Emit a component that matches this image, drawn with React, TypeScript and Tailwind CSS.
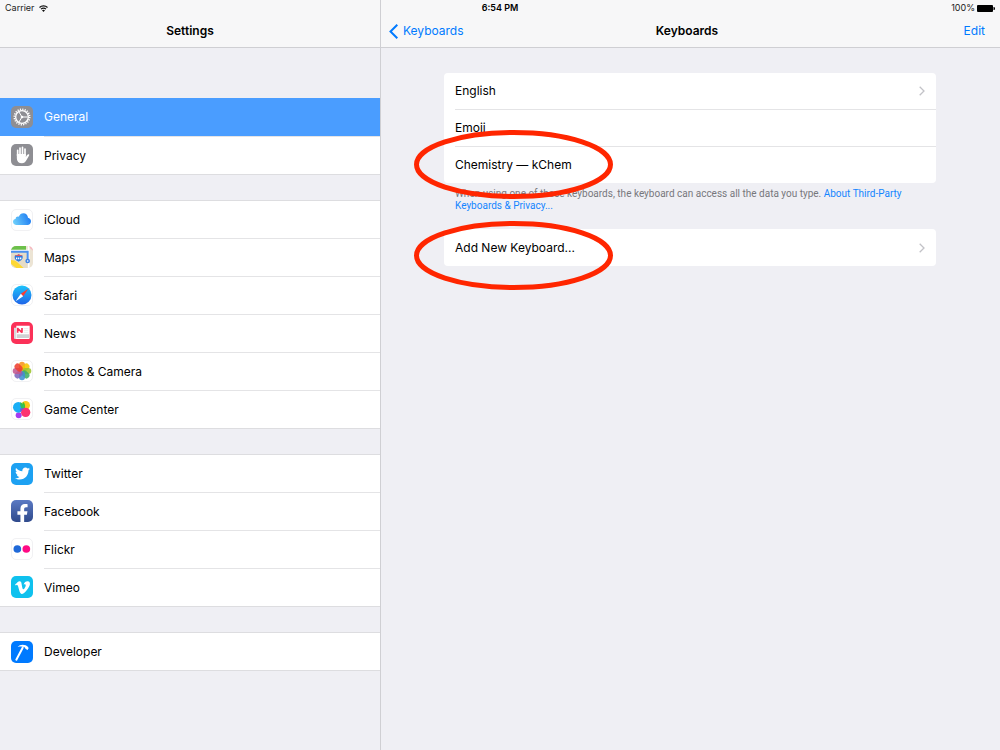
import type { ReactNode } from "react";
import { FaFacebookF, FaTwitter, FaVimeoV } from "react-icons/fa";

interface Item {
  label: string;
  icon: ReactNode;
}

const Tile = ({ className, children }: { className: string; children?: ReactNode }) => (
  <span
    aria-hidden="true"
    className={`relative flex size-[22px] shrink-0 items-center justify-center overflow-hidden rounded-[5px] ${className}`}
  >
    {children}
  </span>
);

// All hand drawn icons share a 66 unit grid
const Art = ({ children }: { children: ReactNode }) => (
  <svg viewBox="0 0 66 66" className="size-[22px] shrink-0" fill="none">
    {children}
  </svg>
);

const GearIcon = () => (
  <Tile className="bg-[#8e8e93]">
    <Art>
      <circle cx="33" cy="33" r="23" stroke="#fff" strokeWidth="5" strokeDasharray="3.6 3.63" />
      <circle cx="33" cy="33" r="19" stroke="#fff" strokeWidth="4" />
      <path d="M33 33h17M33 33l-9-15M33 33l-9 15" stroke="#fff" strokeWidth="3" />
      <circle cx="33" cy="33" r="4" fill="#fff" />
    </Art>
  </Tile>
);

const HandIcon = () => (
  <Tile className="bg-[#8e8e93]">
    <Art>
      <path d="M20 35V19M27 32V12M34.500 32V10M42 34V15" stroke="#fff" strokeWidth="5" strokeLinecap="round" />
      <path
        d="M17.500 30h27v9c2-3 4-7 7-8 3-.5 4 1 2.500 4L46 49c-3 6-7 9-13 9-10 0-15.500-6-15.500-15z"
        fill="#fff"
      />
    </Art>
  </Tile>
);

const CloudIcon = () => (
  <Tile className="border border-[#f1f1f3] bg-white">
    <Art>
      <defs>
        <linearGradient id="cloud" x1="8" y1="44" x2="58" y2="24" gradientUnits="userSpaceOnUse">
          <stop stopColor="#6fd0fb" />
          <stop offset="1" stopColor="#1e7cf2" />
        </linearGradient>
      </defs>
      <path
        d="M17 48C10 48 6 44 6 38.500c0-5 3.500-8.500 8-9.500 0-5 5-8 9.500-6C26 16.500 31 13 37 13c8 0 13.500 6 14 13.500 5 1 9 5 9 10.500 0 6.500-4.500 11-11 11z"
        fill="url(#cloud)"
      />
    </Art>
  </Tile>
);

const MapsIcon = () => (
  <Tile className="bg-[#ece4d4]">
    <Art>
      <path d="M0 0h45v12H0z" fill="#6cc04a" />
      <path d="M50 0h16v14z" fill="#f7b6c0" />
      <path d="M0 12h53v54H0z" fill="#e5dcc8" />
      <path d="M0 42c16 0 22 10 38 24H16L0 54z" fill="#fdd835" />
      <path d="M53 0v66M0 14h50" stroke="#fff" strokeWidth="5" />
      <path d="M0 17h50v28" stroke="#4a90f0" strokeWidth="6" />
      <circle cx="50" cy="45" r="7" fill="#3b82e8" />
      <circle cx="50" cy="45" r="2.500" fill="#fff" />
      <path d="M12 28c4 1 7 0 11-3 4 3 7 4 11 3 3 9 0 15-11 19-11-4-14-10-11-19z" fill="#2f7be0" />
      <path d="M13 28c4 1 6 0 10-3 4 3 6 4 10 3v2H13z" fill="#e7505a" />
      <path d="M15 37h16" stroke="#fff" strokeWidth="5" strokeDasharray="4 2" />
    </Art>
  </Tile>
);

const SafariIcon = () => (
  <Tile className="border border-[#f1f1f3] bg-white">
    <Art>
      <defs>
        <linearGradient id="safari" x1="33" y1="4" x2="33" y2="62" gradientUnits="userSpaceOnUse">
          <stop stopColor="#1dc4fb" />
          <stop offset="1" stopColor="#1f63e8" />
        </linearGradient>
      </defs>
      <circle cx="33" cy="33" r="28.500" fill="url(#safari)" />
      <path d="M52 14L29.500 29.500l7 7z" fill="#ff3b30" />
      <path d="M14 52l15.500-22.500 7 7z" fill="#fff" />
    </Art>
  </Tile>
);

const NewsIcon = () => (
  <Tile className="bg-[#fb3158]">
    <Art>
      <path d="M9 17h9v34H13c-3 0-4-2-4-4z" fill="#d9d9dc" />
      <path d="M16 11h40v36c0 3-1 4-4 4H12c3 0 4-1 4-4z" fill="#fff" />
      <path d="M20 18v14M33 18v14M19 18l14 14" stroke="#fb3158" strokeWidth="5" />
      <path d="M38 20h14M38 26h14M38 32h14" stroke="#ececee" strokeWidth="3" />
      <path d="M18 37h36v11H18z" fill="#d0d0d3" />
    </Art>
  </Tile>
);

const petals = [
  ["#f7931e", 0],
  ["#f5c400", 45],
  ["#9cc42c", 90],
  ["#3fae68", 135],
  ["#3f8fd2", 180],
  ["#7d68bd", 225],
  ["#c2588f", 270],
  ["#ee4030", 315],
] as const;

const PhotosIcon = () => (
  <Tile className="border border-[#f1f1f3] bg-white">
    <Art>
      {petals.map(([color, angle]) => (
        <rect
          key={angle}
          x="24"
          y="5"
          width="18"
          height="27"
          rx="9"
          fill={color}
          fillOpacity="0.88"
          transform={`rotate(${angle} 33 33)`}
        />
      ))}
    </Art>
  </Tile>
);

const GameIcon = () => (
  <Tile className="border border-[#f1f1f3] bg-white">
    <Art>
      <circle cx="44" cy="22" r="13" fill="#f8c81c" />
      <path d="M36 12c6 3 8 12 5 21l-9-2z" fill="#43c52c" />
      <circle cx="23" cy="52" r="9" fill="#a43cf0" />
      <circle cx="22" cy="28" r="16" fill="#19aef5" />
      <path d="M28 13c9 3 13 14 9 23-7-3-11-14-9-23z" fill="#2fbf5c" />
      <circle cx="44" cy="43" r="14" fill="#fc3470" />
      <path d="M30 42c-3-4-3-8-1-11 4 1 8 0 12 0-5 3-9 6-11 11z" fill="#7356d8" />
    </Art>
  </Tile>
);

const FlickrIcon = () => (
  <Tile className="border border-[#f1f1f3] bg-white">
    <Art>
      <circle cx="19" cy="33" r="11.500" fill="#1f69d8" />
      <circle cx="46" cy="33" r="11.500" fill="#ff0a84" />
    </Art>
  </Tile>
);

const HammerIcon = () => (
  <Tile className="bg-[#007aff]">
    <Art>
      <path d="M35 20L16 56" stroke="#fff" strokeWidth="6" strokeLinecap="round" />
      <path
        d="M20 18c6-7 15-8 24-5l5 3 4 5-3 6-6-3-3-5c-7-3-13-3-21-1z"
        fill="#fff"
      />
    </Art>
  </Tile>
);

const groups: Item[][] = [
  [
    { label: "General", icon: <GearIcon /> },
    { label: "Privacy", icon: <HandIcon /> },
  ],
  [
    { label: "iCloud", icon: <CloudIcon /> },
    { label: "Maps", icon: <MapsIcon /> },
    { label: "Safari", icon: <SafariIcon /> },
    { label: "News", icon: <NewsIcon /> },
    { label: "Photos & Camera", icon: <PhotosIcon /> },
    { label: "Game Center", icon: <GameIcon /> },
  ],
  [
    {
      label: "Twitter",
      icon: (
        <Tile className="bg-[#1da1f2] text-white">
          <FaTwitter size={15} />
        </Tile>
      ),
    },
    {
      label: "Facebook",
      icon: (
        <Tile className="bg-gradient-to-b from-[#5b7ac4] to-[#2f4a8c] text-white">
          <FaFacebookF size={19} className="absolute -bottom-px right-px" />
        </Tile>
      ),
    },
    { label: "Flickr", icon: <FlickrIcon /> },
    {
      label: "Vimeo",
      icon: (
        <Tile className="bg-[#0fc1ee] text-white">
          <FaVimeoV size={17} />
        </Tile>
      ),
    },
  ],
  [{ label: "Developer", icon: <HammerIcon /> }],
];

const Chevron = () => (
  <svg viewBox="0 0 6 10" className="h-[10px] w-[6px]" fill="none" aria-hidden="true">
    <path d="M0.700 0.700L5 5L0.700 9.300" stroke="#c2c2c7" strokeWidth="1.300" />
  </svg>
);

// Red marker ring drawn over a row
const Ring = ({ className }: { className: string }) => (
  <svg
    viewBox="0 0 200 70"
    className={`pointer-events-none absolute -left-[30px] z-10 h-[70px] w-[200px] ${className}`}
    fill="none"
    aria-hidden="true"
  >
    <ellipse cx="99.500" cy="34.500" rx="97" ry="32" stroke="#ff2600" strokeWidth="5" />
  </svg>
);

const StatusBar = () => (
  <div className="pointer-events-none absolute inset-x-0 top-0 grid h-4 grid-cols-3 items-center px-[5px] text-[9px] text-[#222]">
    <div className="flex items-center gap-1">
      <span>Carrier</span>
      <svg viewBox="0 0 27 21" className="h-[7px] w-[9px]" fill="none" aria-hidden="true">
        <path d="M1.500 7.500C8 1 19 1 25.500 7.500" stroke="#111" strokeWidth="3.500" />
        <path d="M6 12.500c4-4 11-4 15 0" stroke="#111" strokeWidth="3.500" />
        <path d="M9 16c2.500-2.500 6.500-2.500 9 0l-4.500 5z" fill="#111" />
      </svg>
    </div>
    <div className="text-center font-semibold text-black">6:54 PM</div>
    <div className="flex items-center justify-end gap-[2px]">
      <span>100%</span>
      <svg viewBox="0 0 18 7" className="h-[7px] w-[18px]" aria-hidden="true">
        <rect width="16" height="7" rx="1" fill="#000" />
        <path d="M16.500 2c1 0 1.500 .5 1.500 1.500S17.500 5 16.500 5z" fill="#000" />
      </svg>
    </div>
  </div>
);

const Sidebar = () => (
  <aside className="w-[38%] shrink-0">
    <header className="flex h-12 items-center justify-center border-b border-[#cfcfd3] bg-[#f7f7f8] pt-[15px]">
      <h1 className="font-semibold">Settings</h1>
    </header>
    <nav className="flex flex-col gap-[25px] pt-[50px]">
      {groups.map((items) => (
        <ul key={items[0].label} className="border-b border-[#dddde0] bg-white">
          {items.map(({ label, icon }, i) => {
            const active = label === "General";
            return (
              <li key={label}>
                <a
                  href="#"
                  aria-current={active ? "page" : undefined}
                  className={`flex h-[38px] items-center gap-[11px] pl-[11px] ${
                    active ? "bg-[#4a9dff] text-white" : ""
                  } ${i === 0 && !active ? "border-t border-[#dddde0]" : ""}`}
                >
                  {icon}
                  <span
                    className={`flex flex-1 items-center self-stretch ${
                      i === 0 ? "" : "border-t border-[#e4e4e6]"
                    }`}
                  >
                    {label}
                  </span>
                </a>
              </li>
            );
          })}
        </ul>
      ))}
    </nav>
  </aside>
);

const keyboards = ["English", "Emoji", "Chemistry — kChem"];

const KeyboardsPane = () => (
  <main className="min-w-0 flex-1 border-l border-[#cfcfd3]">
    <header className="grid h-12 grid-cols-3 items-center border-b border-[#cfcfd3] bg-[#f7f7f8] pt-[15px] pr-[15px] pl-2">
      <button type="button" className="flex items-center gap-[5px] text-[#007aff]">
        <svg viewBox="0 0 9 15" className="h-[15px] w-[9px]" fill="none" aria-hidden="true">
          <path d="M8.300 0.700L1.500 7.500L8.300 14.300" stroke="#007aff" strokeWidth="2" />
        </svg>
        Keyboards
      </button>
      <h2 className="text-center font-semibold">Keyboards</h2>
      <button type="button" className="justify-self-end text-[#007aff]">
        Edit
      </button>
    </header>

    <div className="pt-[25px] pr-16 pl-[63px]">
      <section className="relative">
        <ul className="rounded-[4px] bg-white pl-[11px]">
          {keyboards.map((name, i) => (
            <li key={name} className={i > 0 ? "border-t border-[#e4e4e6]" : ""}>
              <button type="button" className="flex h-9 w-full items-center justify-between pr-[11px]">
                {name}
                {i === 0 && <Chevron />}
              </button>
            </li>
          ))}
        </ul>
        <Ring className="top-[57px]" />
      </section>

      <p className="mt-[5px] pr-4 pl-[11px] font-['Roboto','Liberation_Sans',sans-serif] text-[10px] leading-3 text-[#77777c]">
        When using one of these keyboards, the keyboard can access all the data you type.{" "}
        <a href="#" className="text-[#1485ff]">
          About Third-Party Keyboards &amp; Privacy...
        </a>
      </p>

      <section className="relative mt-[17px]">
        <button
          type="button"
          className="flex h-[37px] w-full items-center justify-between rounded-[4px] bg-white px-[11px]"
        >
          Add New Keyboard...
          <Chevron />
        </button>
        <Ring className="-top-2" />
      </section>
    </div>
  </main>
);

const App = () => (
  <div className="relative flex min-h-screen bg-[#efeff4] font-['Inter','Liberation_Sans',sans-serif] text-[12px] text-black">
    <Sidebar />
    <KeyboardsPane />
    <StatusBar />
  </div>
);

export default App;
